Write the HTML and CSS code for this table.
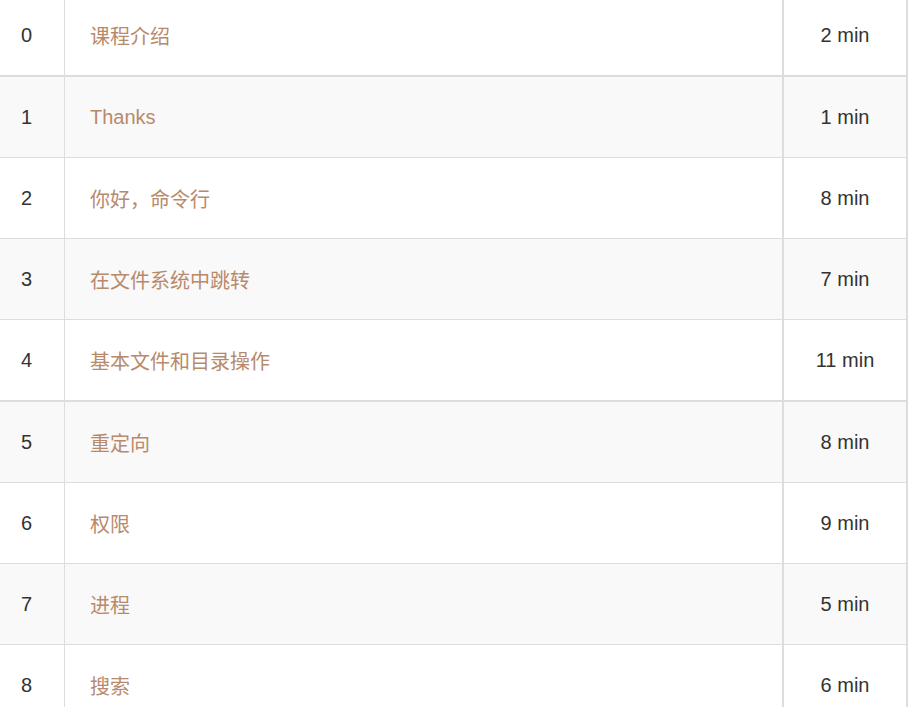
FILE: index.html
```html
<!DOCTYPE html>
<html lang="zh">
<head>
<meta charset="utf-8">
<link rel="stylesheet" href="styles.css">
</head>
<body>
<div class="table">
  <div class="row thick"><div class="num">0</div><div class="title"><a href="#">课程介绍</a></div><div class="dur">2 min</div></div>
  <div class="row alt"><div class="num">1</div><div class="title"><a href="#">Thanks</a></div><div class="dur">1 min</div></div>
  <div class="row"><div class="num">2</div><div class="title"><a href="#">你好，命令行</a></div><div class="dur">8 min</div></div>
  <div class="row alt"><div class="num">3</div><div class="title"><a href="#">在文件系统中跳转</a></div><div class="dur">7 min</div></div>
  <div class="row thick"><div class="num">4</div><div class="title"><a href="#">基本文件和目录操作</a></div><div class="dur">11 min</div></div>
  <div class="row alt"><div class="num">5</div><div class="title"><a href="#">重定向</a></div><div class="dur">8 min</div></div>
  <div class="row"><div class="num">6</div><div class="title"><a href="#">权限</a></div><div class="dur">9 min</div></div>
  <div class="row alt"><div class="num">7</div><div class="title"><a href="#">进程</a></div><div class="dur">5 min</div></div>
  <div class="row"><div class="num">8</div><div class="title"><a href="#">搜索</a></div><div class="dur">6 min</div></div>
</div>
</body>
</html>
```
FILE: styles.css
```css
html, body {
  margin: 0;
  padding: 0;
  background: #fff;
  overflow: hidden;
}
body {
  font-family: "Liberation Sans", Arial, "Noto Sans CJK SC", sans-serif;
  font-size: 20px;
  color: #333;
}
.table {
  width: 908px;
  margin-top: -5px;
}
.row {
  display: flex;
  height: 80px;
  border-bottom: 1px solid #ddd;
  background: #fff;
}
.row.thick {
  border-bottom-width: 2px;
}
.row.alt {
  background: #f9f9f9;
}
.row > div {
  display: flex;
  align-items: center;
}
.num {
  width: 43px;
  padding-left: 21px;
  border-right: 1px solid #ddd;
}
.title {
  flex: 1;
  padding-left: 25px;
  border-right: 2px solid #ddd;
}
.title a {
  color: #b88a6c;
  text-decoration: none;
  font-family: "Liberation Sans", Arial, "Noto Sans CJK SC", sans-serif;
}
.dur {
  width: 122px;
  justify-content: center;
  border-right: 2px solid #ddd;
}
```
